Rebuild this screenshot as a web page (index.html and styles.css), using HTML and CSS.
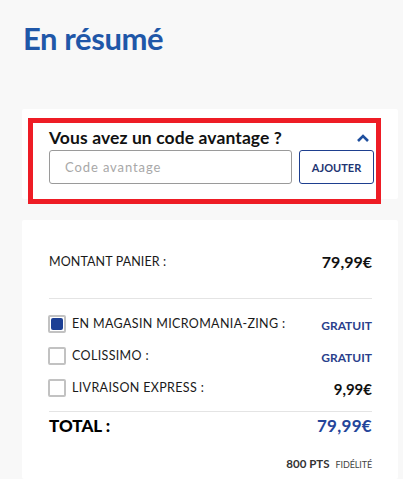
FILE: index.html
```html
<!DOCTYPE html>
<html lang="fr">
<head>
<meta charset="utf-8">
<link rel="stylesheet" href="styles.css">
</head>
<body>
<div class="page">
  <h1 class="title">En résumé</h1>

  <section class="card promo">
    <div class="promo-head">
      <h2 class="promo-title">Vous avez un code avantage ?</h2>
      <svg class="chevron" width="12" height="8" viewBox="0 0 12 8"><path d="M1 7 L6 2 L11 7" fill="none" stroke="#1f4f9e" stroke-width="2.6"/></svg>
    </div>
    <div class="promo-form">
      <input class="promo-input" type="text" placeholder="Code avantage">
      <button class="promo-btn">AJOUTER</button>
    </div>
    <div class="highlight"></div>
  </section>

  <section class="card summary">
    <div class="row amount">
      <span class="label">MONTANT PANIER :</span>
      <span class="price">79,99€</span>
    </div>
    <hr class="sep sep1">
    <div class="row ship">
      <span class="opt"><span class="check checked"></span><span class="label">EN MAGASIN MICROMANIA-ZING :</span></span>
      <span class="free">GRATUIT</span>
    </div>
    <div class="row ship">
      <span class="opt"><span class="check"></span><span class="label">COLISSIMO :</span></span>
      <span class="free">GRATUIT</span>
    </div>
    <div class="row ship">
      <span class="opt"><span class="check"></span><span class="label">LIVRAISON EXPRESS :</span></span>
      <span class="price small">9,99€</span>
    </div>
    <hr class="sep sep2">
    <div class="row total">
      <span class="total-label">TOTAL :</span>
      <span class="total-price">79,99€</span>
    </div>
    <div class="points"><b>800 PTS</b><span>FIDÉLITÉ</span></div>
  </section>
</div>
</body>
</html>
```

FILE: styles.css
```css
* { box-sizing: border-box; }
html, body { margin: 0; padding: 0; }
body {
  background: #f8f8f8;
  font-family: "Lato", "Open Sans", sans-serif;
  color: #111;
  width: 403px;
  height: 479px;
  overflow: hidden;
}
.page {
  padding: 19px 5px 0 22px;
}
.title {
  margin: 0 0 0 1px;
  font-size: 31px;
  line-height: 38px;
  font-weight: 700;
  color: #1f57a8;
  letter-spacing: -0.4px;
}
.card {
  background: #fff;
  border-radius: 2px;
}
.promo {
  position: relative;
  margin-top: 52px;
  height: 90px;
  padding: 17px 24px 0 27px;
}
.promo-head {
  display: flex;
  justify-content: space-between;
  align-items: center;
  height: 22px;
}
.promo-title {
  margin: 0;
  font-size: 17.5px;
  font-weight: 700;
  color: #111;
  letter-spacing: 0.1px;
}
.chevron { margin-right: 5px; margin-top: 2px; }
.promo-form {
  display: flex;
  gap: 7px;
  margin-top: 2px;
}
.promo-input {
  width: 243px;
  height: 34px;
  border: 1px solid #9a9a9a;
  border-radius: 3px;
  padding: 0 15px;
  font-family: "Lato", sans-serif;
  font-size: 13px;
  color: #333;
  letter-spacing: 0.9px;
  outline: none;
}
.promo-input::placeholder { color: #a8a8a8; }
.promo-btn {
  width: 75px;
  height: 34px;
  border: 1px solid #1e3f8f;
  border-radius: 3px;
  background: #fff;
  color: #1e3573;
  font-family: "Lato", sans-serif;
  font-weight: 700;
  font-size: 11px;
  padding: 0;
}
.highlight {
  position: absolute;
  left: 6px;
  top: 9px;
  width: 353px;
  height: 86px;
  border: 5px solid #ee1c25;
  pointer-events: none;
}
.summary {
  margin-top: 21px;
  height: 259px;
  padding: 30px 26px 0 27px;
}
.row {
  display: flex;
  justify-content: space-between;
  align-items: center;
}
.amount { height: 22px; }
.label {
  font-size: 12.5px;
  font-weight: 400;
  color: #1a1a1a;
  letter-spacing: 0.35px;
}
.amount .label { letter-spacing: 0.1px; }
.price {
  font-size: 16px;
  font-weight: 700;
  color: #111;
}
.price.small { font-size: 15px; }
.sep {
  border: 0;
  border-top: 1px solid #e4e4e4;
  margin: 0;
}
.sep1 { margin-top: 26px; margin-bottom: 10px; }
.ship { height: 32px; }
.opt { display: flex; align-items: center; gap: 6px; }
.ship .opt { margin-left: -1px; margin-top: -3px; }
.check {
  width: 18px;
  height: 18px;
  border: 2px solid #c2c2c2;
  border-radius: 2px;
  display: flex;
  align-items: center;
  justify-content: center;
  background: #fff;
}
.check.checked::after {
  content: "";
  width: 12px;
  height: 12px;
  background: #1c3f94;
  border-radius: 2px;
}
.free {
  font-size: 12px;
  font-weight: 700;
  color: #2b3f8c;
}
.sep2 { margin-top: 6px; }
.total { height: 27px; }
.total-label {
  font-size: 17px;
  font-weight: 900;
  color: #000;
}
.total-price {
  font-size: 17px;
  font-weight: 700;
  color: #24459a;
  letter-spacing: 0.3px;
}
.points {
  margin-top: 18px;
  text-align: right;
  font-size: 11.5px;
  color: #333;
}
.points b { font-weight: 700; }
.points span {
  font-size: 9px;
  margin-left: 6px;
  color: #444;
  letter-spacing: -0.1px;
}
```
